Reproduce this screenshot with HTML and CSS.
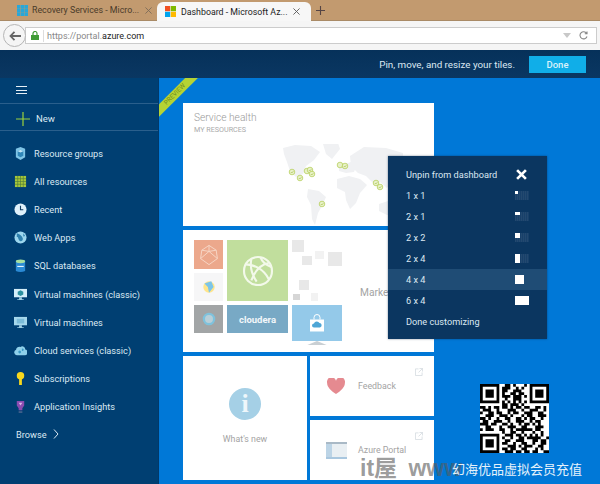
FILE: index.html
```html
<!DOCTYPE html>
<html lang="en">
<head>
<meta charset="utf-8">
<title>Dashboard - Microsoft Azure</title>
<link rel="stylesheet" href="styles.css">
</head>
<body>
<div class="tabstrip">
  <div class="tab">
    <svg class="favicon" viewBox="0 0 12 12"><path fill="#2aa7d8" d="M0 0h3.700v3.700H0zM4.200 0h3.700v3.700H4.200zM8.300 0H12v3.700H8.300zM0 4.200h3.700v3.700H0zM4.200 4.200h3.700v3.700H4.200zM8.300 4.200H12v3.700H8.300zM0 8.300h3.700V12H0zM4.200 8.300h3.700V12H4.200zM8.300 8.300H12V12H8.300z"/></svg>
    <span class="tab-title">Recovery Services - Micro...</span>
    <svg class="tab-x" viewBox="0 0 8 8"><path d="M.5.5l7 7M7.500.5l-7 7"/></svg>
  </div>
  <div class="tab tab-active">
    <svg class="favicon" viewBox="0 0 12 12"><path fill="#f25022" d="M0 0h5.700v5.700H0z"/><path fill="#7fba00" d="M6.300 0H12v5.700H6.300z"/><path fill="#00a4ef" d="M0 6.300h5.700V12H0z"/><path fill="#ffb900" d="M6.300 6.300H12V12H6.300z"/></svg>
    <span class="tab-title">Dashboard - Microsoft Az...</span>
    <svg class="tab-x" viewBox="0 0 8 8"><path d="M.5.5l7 7M7.500.5l-7 7"/></svg>
  </div>
  <svg class="newtab" viewBox="0 0 9 9"><path d="M4.500 0v9M0 4.500h9"/></svg>
</div>

<div class="toolbar">
  <div class="back">
    <svg viewBox="0 0 12 10"><path d="M5.500.8L1.500 5l4 4.200M2 5h10"/></svg>
  </div>
  <div class="urlbar">
    <svg class="lock" viewBox="0 0 8 9"><path d="M0 4h8v5H0z"/><path class="shackle" d="M2 4V2.500a2 2 0 0 1 4 0V4"/></svg>
    <span class="url"><span class="url-dim">https://portal.</span>azure.com</span>
    <svg class="drop" viewBox="0 0 8 5"><path d="M0 0h8L4 5z"/></svg>
    <svg class="reload" viewBox="0 0 9 9"><path d="M7.600 2.300A3.600 3.600 0 1 0 8 5.500M8 .6v2.200H5.800"/></svg>
  </div>
</div>

<div class="topbar">
  <span class="topbar-msg">Pin, move, and resize your tiles.</span>
  <button class="done">Done</button>
</div>

<div class="shell">
  <nav class="sidebar">
    <div class="burger"><span></span><span></span><span></span></div>
    <div class="new-row">
      <svg class="plus" viewBox="0 0 14 14"><path d="M7 0v14M0 7h14"/></svg>
      <span>New</span>
    </div>
    <ul class="nav">
      <li><svg viewBox="0 0 14 14"><path fill="#7fc4e6" d="M2 2l5-2 5 2v9l-5 3-5-3z"/><path fill="#2f86b8" d="M4 4.500L7 3l3 1.500v5L7 11 4 9.500z"/><path fill="#bfe4f5" d="M4 4.500L7 3l3 1.500L7 6z"/></svg><span>Resource groups</span></li>
      <li><svg viewBox="0 0 14 14"><path fill="#a6c73a" d="M1 1h12v12H1z"/><path stroke="#4f7d3a" stroke-width=".7" d="M4 1v12M7 1v12M10 1v12M1 4h12M1 7h12M1 10h12"/></svg><span>All resources</span></li>
      <li><svg viewBox="0 0 14 14"><circle cx="7" cy="7" r="6.500" fill="#dff1fb"/><path fill="none" stroke="#123d63" stroke-width="1.200" d="M7 3v4.300h3"/></svg><span>Recent</span></li>
      <li><svg viewBox="0 0 14 14"><circle cx="7" cy="7" r="6.500" fill="#9cd6ee"/><path fill="#2d80ae" d="M3 2.500c3 1 6 3 6.500 5.500S7 12 5.500 10 5 6 3 6.500zM10 2.500l2 3-2 .5z"/></svg><span>Web Apps</span></li>
      <li><svg viewBox="0 0 14 14"><path fill="#2a8ad4" d="M2 2h10v11c-3 1.300-7 1.300-10 0z"/><ellipse cx="7" cy="2.500" rx="5" ry="2" fill="#a6e0a0"/><path stroke="#e6f4fb" stroke-width="1.200" d="M3.500 8h7"/></svg><span>SQL databases</span></li>
      <li><svg viewBox="0 0 14 14"><path fill="#d4eef9" d="M0 1h14v9H0z"/><path fill="#2a8f9e" d="M7 2.500l3 1.500v3l-3 1.500L4 7V4z"/><path fill="#9fcfe4" d="M5.500 10h3v2h2v1h-7v-1h2z"/></svg><span>Virtual machines (classic)</span></li>
      <li><svg viewBox="0 0 14 14"><path fill="#a7d8ec" d="M0 1h14v9H0z"/><path fill="#7cbcd8" d="M3 3h8v5H3z"/><path fill="#9fcfe4" d="M5.500 10h3v2h2v1h-7v-1h2z"/></svg><span>Virtual machines</span></li>
      <li><svg viewBox="0 0 14 14"><path fill="#8fd0ea" d="M3 12a3 3 0 0 1-.8-5.800A3.500 3.500 0 0 1 7 3.300 3 3 0 0 1 12 6a3 3 0 0 1-1 6z"/><path fill="#3d9ac4" d="M5 7.500a1.500 1.500 0 1 1 0 2 1.500 1.500 0 0 1 0-2zM8.500 5a1.300 1.300 0 1 1 0 2.200z"/></svg><span>Cloud services (classic)</span></li>
      <li><svg viewBox="0 0 14 14"><circle cx="7" cy="4" r="4" fill="#f7d71e"/><path fill="#f7d71e" d="M5.500 6h3v8h-3z"/></svg><span>Subscriptions</span></li>
      <li><svg viewBox="0 0 14 14"><path fill="#8a4bb0" d="M3 1h8v5l-2 3v2H5V9L3 6z"/><path fill="#d9b8ea" d="M5 3h4L7 6z"/><path fill="#3e5f8a" d="M5 12h4v2H5z"/></svg><span>Application Insights</span></li>
    </ul>
    <div class="browse">
      <span>Browse</span>
      <svg viewBox="0 0 6 10"><path d="M1 .5L5 5 1 9.500"/></svg>
    </div>
  </nav>

  <main class="board">
    <div class="ribbon"><span>PREVIEW</span></div>
    <div class="tiles">
      <section class="tile tile-health">
        <h2 class="tile-title">Service health</h2>
        <p class="tile-sub">MY RESOURCES</p>
        <svg class="map" viewBox="0 0 120 82">
          <g fill="#f0f1f3">
            <path d="M0 4l12-3 16 1 9 6-6 8-8 6-3 8-7 3-6-6-3-9-3-8z"/>
            <path d="M40 0l15-1 2 6-8 10-6-5z"/>
            <path d="M25 45l11 2 7 6-4 9-4 7-3 12-3-6-1-14-4-8z"/>
            <path d="M56 22l12-4 5 5-2 5-8 1-7-2z"/>
            <path d="M54 35l12-3 11 3 7 6-7 8-4 10-6 6-4-9-1-8-8-4z"/>
            <path d="M67 12l14-9 22 1 17 5v24l-10 3-6 8-7-6-6 2-8-8-8-3-7-7z"/>
            <path d="M96 60l12-4 8 5-2 9-10 1-8-4z"/>
          </g>
          <g class="checks">
            <circle cx="9" cy="28" r="2.800"/><circle cx="17" cy="34" r="2.800"/><circle cx="24" cy="27" r="2.800"/><circle cx="27" cy="26" r="2.800"/><circle cx="29" cy="30" r="2.800"/><circle cx="57" cy="21" r="2.800"/><circle cx="62" cy="22" r="2.800"/><circle cx="93" cy="39" r="2.800"/><circle cx="97" cy="43" r="2.800"/><circle cx="39" cy="60" r="2.800"/>
            <path d="M7.800 28l1 1 1.600-1.800M15.800 34l1 1 1.600-1.800M25.800 26l1 1 1.600-1.800M27.800 30l1 1 1.600-1.800M60.800 22l1 1 1.600-1.800M95.800 43l1 1 1.600-1.800M91.800 39l1 1 1.600-1.800M37.800 60l1 1 1.600-1.800"/>
          </g>
        </svg>
      </section>

      <section class="tile tile-market">
        <div class="mosaic">
          <div class="m m-orange"><svg viewBox="0 0 20 20"><path d="M10 2l6 4 1 7-7 5-7-5 1-7zM10 2v5M4 6l6 1 6-1M3 13l7-6 7 6"/></svg></div>
          <div class="m m-green"><svg viewBox="0 0 24 24"><circle cx="12" cy="12" r="10.500"/><path d="M3 7c5 0 13 3 17 11M7 3c-1 5 0 11 4 17M20 6c-5 1-10 5-13 13M14 2c1 3 3 5 8 7"/></svg></div>
          <svg class="scatter" viewBox="0 0 50 61"><path fill="#e8e8e8" d="M0 0h12v12H0zM10 16h10v9H10zM36 12h14v14H36zM7 40h10v10H7z"/><path fill="#f2f2f2" d="M23 11h9v8h-9zM19 53h7v8h-7z"/><path fill="#d6d6d6" d="M1 54h7v6H1z"/></svg>
          <div class="m m-globe"><svg viewBox="0 0 14 14"><circle cx="7" cy="7" r="5" fill="#ffe58a"/><path fill="#7cc5e8" d="M3 4l6-2 2 5-4 5-1-5z"/></svg></div>
          <div class="m m-gray"><svg viewBox="0 0 14 14"><circle cx="7" cy="7" r="4.500"/></svg></div>
          <div class="m m-cloudera">cloudera</div>
          <div class="m-monitor">
            <div class="screen"><svg viewBox="0 0 16 18"><path fill="#fff" d="M1 5h14v12H1z"/><path fill="none" stroke="#fff" d="M5 5V3a3 3 0 0 1 6 0v2"/><path fill="#4ea6d6" d="M5 13a2 2 0 0 1 0-4 3 3 0 0 1 5.500-.500A2.300 2.300 0 0 1 11 13z"/></svg></div>
            <svg class="stand" viewBox="0 0 24 5"><path d="M12 0l12 5H0z"/></svg>
          </div>
        </div>
        <span class="market-label">Marketplace</span>
      </section>

      <section class="tile tile-new">
        <div class="info">i</div>
        <span class="tile-label">What's new</span>
      </section>

      <section class="tile tile-link">
        <svg class="ext" viewBox="0 0 9 9"><path d="M4 1H.5v7.500H8V5M5 .5h3.500V4M8.500.5L4 5"/></svg>
        <svg class="heart" viewBox="0 0 20 18"><path d="M10 18C4 14 0 10 0 5.500A5 5 0 0 1 10 3a5 5 0 0 1 10 2.500C20 10 16 14 10 18z"/></svg>
        <span class="tile-label">Feedback</span>
      </section>

      <section class="tile tile-link">
        <svg class="ext" viewBox="0 0 9 9"><path d="M4 1H.5v7.500H8V5M5 .5h3.500V4M8.500.5L4 5"/></svg>
        <svg class="portal" viewBox="0 0 21 17"><path fill="#e9eff3" d="M0 0h21v17H0z"/><path fill="#a9b9c6" d="M0 0h21v2H0z"/><path fill="#bcd4e6" d="M0 2h6v13H0z"/><path fill="#a9c7df" d="M0 15h21v2H0z"/></svg>
        <span class="tile-label">Azure Portal</span>
      </section>
    </div>
  </main>
</div>

<aside class="menu">
  <div class="menu-row"><span>Unpin from dashboard</span><svg class="menu-x" viewBox="0 0 10 10"><path d="M1 1l8 8M9 1l-8 8"/></svg></div>
  <div class="menu-row"><span>1 x 1</span><i class="size"><b class="f11"></b></i></div>
  <div class="menu-row"><span>2 x 1</span><i class="size"><b class="f21"></b></i></div>
  <div class="menu-row"><span>2 x 2</span><i class="size"><b class="f22"></b></i></div>
  <div class="menu-row"><span>2 x 4</span><i class="size"><b class="f24"></b></i></div>
  <div class="menu-row menu-hl"><span>4 x 4</span><i class="size"><b class="f44"></b></i></div>
  <div class="menu-row"><span>6 x 4</span><i class="size"><b class="f64"></b></i></div>
  <div class="menu-row"><span>Done customizing</span></div>
</aside>

<div class="mark-site">it屋 www</div>
<div class="mark-qr">
  <svg class="qr" viewBox="0 0 25 25">
    <path fill="#000" fill-rule="evenodd" d="M0 0h7v7H0zM1 1v5h5V1zM2 2h3v3H2zM18 0h7v7h-7zM19 1v5h5V1zM20 2h3v3h-3zM0 18h7v7H0zM1 19v5h5v-5zM2 20h3v3H2z"/>
    <path fill="none" stroke="#000" d="M9 .5h2m1 0h1m3 0h1M8 1.500h3m2 0h1m1 0h1M8 2.500h2m2 0h3M8 3.500h1m2 0h2m1 0h2M8 4.500h3m1 0h3m1 0h1M9 5.500h1m2 0h3M8 6.500h1m1 0h1m1 0h1m1 0h1m1 0h1M8 7.500h2m1 0h3m1 0h1M0 8.500h2m1 0h1m1 0h2m1 0h2m1 0h1m1 0h2m1 0h2m2 0h2m1 0h1M1 9.500h3m2 0h1m3 0h3m2 0h1m2 0h3m2 0h1M0 10.500h1m2 0h2m1 0h2m2 0h1m1 0h2m2 0h3m2 0h2M2 11.500h3m2 0h3m1 0h1m3 0h1m1 0h2m2 0h3M0 12.500h2m1 0h1m2 0h1m2 0h2m2 0h2m1 0h1m1 0h2m2 0h1M1 13.500h2m2 0h3m2 0h1m2 0h3m2 0h1m1 0h2M0 14.500h3m1 0h2m2 0h2m1 0h1m2 0h1m1 0h2m1 0h1m1 0h1M2 15.500h2m3 0h1m2 0h3m2 0h2m3 0h3M0 16.500h1m1 0h3m2 0h2m2 0h1m1 0h6m1 0h2M8 17.500h1m2 0h2m2 0h1m3 0h1m2 0h1M9 18.500h3m1 0h2m1 0h1m1 0h1m1 0h1m1 0h1M8 19.500h1m2 0h1m2 0h2m1 0h5m2 0h1M9 20.500h2m2 0h3m3 0h2m1 0h2M8 21.500h2m2 0h1m2 0h2m2 0h1m2 0h2M10 22.500h3m1 0h1m1 0h3m2 0h2M8 23.500h2m1 0h2m2 0h2m3 0h1m1 0h1M9 24.500h3m1 0h2m1 0h2m1 0h2m2 0h2"/>
  </svg>
  <div class="mark-text">幻海优品虚拟会员充值</div>
</div>
</body>
</html>
```

FILE: styles.css
```css
* { box-sizing: border-box; }
html, body { margin: 0; padding: 0; }
body {
  width: 600px;
  height: 484px;
  overflow: hidden;
  position: relative;
  background: #0078d7;
  font-family: Roboto, "Open Sans", sans-serif;
  font-size: 9.2px;
}

/* browser chrome */
.tabstrip {
  height: 21px;
  background: #c29a6f;
  display: flex;
  align-items: stretch;
  padding-left: 17px;
  border-bottom: 1px solid #a98a66;
}
.tab {
  display: flex;
  align-items: center;
  width: 140px;
  color: #4a3a2a;
}
.tab-active {
  width: 154px;
  margin-top: 2px;
  margin-bottom: -1px;
  padding-left: 8px;
  background: #f7f7f7;
  border-radius: 6px 6px 0 0;
  color: #222;
}
.favicon { width: 11px; height: 11px; flex: none; margin-right: 4px; }
.tab-active .favicon { margin-right: 5px; }
.tab-title { font-size: 8.8px; white-space: nowrap; flex: 1; overflow: hidden; }
.tab-x { width: 7px; height: 7px; flex: none; margin-right: 5px; fill: none; stroke: #7a6a58; stroke-width: 1; }
.tab-active .tab-x { stroke: #555; margin-right: 11px; }
.newtab { width: 9px; height: 9px; align-self: center; margin-left: 5px; fill: none; stroke: #544; stroke-width: 1.100; }

.toolbar {
  height: 29px;
  background: #f5f5f5;
  display: flex;
  align-items: center;
  padding: 0 3px;
}
.back {
  width: 23px;
  height: 23px;
  flex: none;
  border-radius: 50%;
  border: 1px solid #b5b5b5;
  background: #f5f5f5;
  display: flex;
  align-items: center;
  justify-content: center;
  margin-right: -1px;
  position: relative;
  z-index: 1;
}
.back svg { width: 12px; height: 10px; fill: none; stroke: #666; stroke-width: 1.800; }
.urlbar {
  flex: 1;
  height: 17px;
  background: #fff;
  border: 1px solid #ccc;
  display: flex;
  align-items: center;
  padding: 0 8px 0 5px;
}
.lock { width: 8px; height: 9px; fill: #3f9c35; flex: none; margin-right: 4px; }
.lock .shackle { fill: none; stroke: #3f9c35; stroke-width: 1.200; }
.url { flex: 1; font-size: 9px; color: #222; border-left: 1px solid #ddd; padding-left: 3px; line-height: 12px; }
.url-dim { color: #888; }
.drop { width: 8px; height: 5px; fill: #c8c8c8; flex: none; margin-right: 8px; }
.reload { width: 9px; height: 9px; fill: none; stroke: #888; stroke-width: 1.100; flex: none; }

.topbar {
  height: 28px;
  background: linear-gradient(#06315a, #0a3762);
  display: flex;
  align-items: center;
  justify-content: flex-end;
  padding-right: 14px;
  color: #dce8f2;
}
.topbar-msg { font-size: 9.800px; margin-right: 14px; }
.done {
  width: 57px;
  height: 17px;
  border: 0;
  padding: 0;
  background: #10aee8;
  color: #d8f2fb;
  font: 500 9.500px Roboto, sans-serif;
}

/* sidebar */
.shell { display: flex; height: 406px; }
.sidebar {
  width: 159px;
  flex: none;
  background: #003f72;
  border-right: 1px solid #00396a;
  color: #dbe9f3;
}
.burger {
  height: 26px;
  padding: 8px 0 0 16px;
  border-bottom: 1px solid #2a5f8c;
}
.burger span { display: block; width: 11px; height: 1px; background: #e6eff6; margin-bottom: 2.500px; }
.new-row {
  height: 27px;
  display: flex;
  align-items: center;
  padding: 3px 0 0 16px;
  border-bottom: 1px solid #2a5f8c;
  font-size: 9.500px;
}
.plus { width: 14px; height: 14px; margin-right: 6px; fill: none; stroke: #9bd13c; stroke-width: 1.200; }
.nav { list-style: none; margin: 8px 0 0; padding: 0; }
.nav li { height: 28.200px; display: flex; align-items: center; padding-left: 14px; white-space: nowrap; }
.nav svg { width: 13px; height: 13px; flex: none; margin-right: 7px; }
.browse { display: flex; align-items: center; padding: 8px 0 0 16px; }
.browse svg { width: 6px; height: 10px; margin-left: 6px; fill: none; stroke: #dbe9f3; stroke-width: 1; }

/* board */
.board { flex: 1; position: relative; overflow: hidden; padding: 25px 0 0 24px; background: #0078d7; }
.ribbon {
  position: absolute;
  left: -14px;
  top: 12px;
  width: 60px;
  height: 9px;
  transform: rotate(-45deg);
  background: #b5d334;
  color: #6f8c1c;
  font-size: 6.500px;
  line-height: 9px;
  text-align: center;
}
.ribbon span { display: block; }
.tiles {
  display: grid;
  grid-template-columns: 124px 124px;
  grid-template-rows: 123px 122px 60px 60px;
  gap: 4px 3px;
  width: 251px;
}
.tile { background: #fff; min-width: 0; color: #a3a3a3; }
.tile-health { grid-column: 1 / 3; padding: 9px 0 0 11px; }
.tile-title { margin: 0; font-weight: 300; font-size: 10.200px; line-height: 12px; color: #999; }
.tile-sub { margin: 1px 0 0; font-size: 7.200px; line-height: 10px; color: #aaa; }
.map { display: block; width: 120px; height: 82px; margin: 9px 0 0 89px; }
.checks circle { fill: #e8f1c8; stroke: #b0cc4f; stroke-width: .7; }
.checks path { fill: none; stroke: #9dbb3c; stroke-width: .6; }

.tile-market { grid-column: 1 / 3; display: flex; align-items: flex-start; padding: 10px 0 0 11px; }
.mosaic {
  display: grid;
  grid-template-columns: 29px 61px 50px;
  grid-template-rows: 29px 28px 28px;
  gap: 4px;
  width: 148px;
  flex: none;
}
.m { display: flex; align-items: center; justify-content: center; }
.m-orange { background: #eca88c; grid-column: 1; grid-row: 1; }
.m-orange svg { width: 24px; height: 24px; fill: none; stroke: #f7d6c6; stroke-width: .8; }
.m-green { grid-column: 2; grid-row: 1 / 3; background: #c1de9d; }
.m-green svg { width: 32px; height: 32px; fill: none; stroke: #f3f9ea; stroke-width: 1.600; }
.scatter { grid-column: 3; grid-row: 1 / 3; width: 50px; height: 61px; }
.m-globe { background: #f6f6f7; grid-column: 1; grid-row: 2; }
.m-globe svg { width: 16px; height: 16px; }
.m-gray { background: #a2a5a6; grid-column: 1; grid-row: 3; }
.m-gray svg { width: 16px; height: 16px; fill: #b9cfd8; stroke: #7fc2dc; stroke-width: 2; }
.m-cloudera { background: #78a9c5; color: #f2f7fa; font-weight: 700; font-size: 9.500px; grid-column: 2; grid-row: 3; }
.m-monitor { height: 40px; display: flex; flex-direction: column; align-items: center; grid-column: 3; grid-row: 3; }
.screen { width: 50px; height: 36px; background: #94c9e9; display: flex; align-items: center; justify-content: center; flex: none; }
.screen svg { width: 16px; height: 19px; }
.stand { width: 24px; height: 4px; fill: #c9cfd3; flex: none; }
.market-label { font-size: 10.200px; margin: 47px 0 0 18px; color: #a3a3a3; white-space: nowrap; }

.tile-new { grid-row: 3 / 5; display: flex; flex-direction: column; align-items: center; padding-top: 32px; }
.info {
  width: 32px;
  height: 32px;
  border-radius: 50%;
  background: #a5d0e6;
  color: #eef7fb;
  font: 700 26px/32px "Liberation Serif", serif;
  text-align: center;
}
.tile-new .tile-label { margin-top: 14px; font-size: 8.800px; }
.tile-link { display: flex; align-items: center; position: relative; padding-left: 16px; }
.tile-link .tile-label { font-size: 8.800px; }
.ext { position: absolute; right: 11px; top: 12px; width: 8px; height: 8px; fill: none; stroke: #d3dbe0; stroke-width: .9; }
.heart { width: 20px; height: 16px; fill: #e58a90; flex: none; margin-right: 12px; }
.portal { width: 21px; height: 17px; flex: none; margin-right: 11px; }

/* customize menu */
.menu {
  position: absolute;
  left: 388px;
  top: 156px;
  width: 159px;
  height: 183px;
  padding-top: 8px;
  background: #0b3660;
  color: #dce8f2;
  box-shadow: 0 0 2px rgba(0, 30, 60, .5);
}
.menu-row {
  height: 21px;
  display: flex;
  align-items: center;
  justify-content: space-between;
  padding: 0 18px;
}
.menu-hl { background: #1f4c75; }
.menu-x { width: 11px; height: 11px; margin-right: 2px; fill: none; stroke: #fff; stroke-width: 2.400; }
.size {
  display: block;
  width: 14px;
  height: 9px;
  background: repeating-linear-gradient(90deg, #23496f 0 1px, #18406a 1px 2px);
}
.size b { display: block; background: #fff; }
.f11 { width: 3px; height: 3px; }
.f21 { width: 5px; height: 3px; }
.f22 { width: 5px; height: 5px; }
.f24 { width: 5px; height: 9px; }
.f44 { width: 9px; height: 9px; }
.f64 { width: 14px; height: 9px; }
.menu-hl .size { background: none; }

/* watermark */
.mark-site {
  position: absolute;
  left: 360px;
  top: 453px;
  font: 700 23px/30px "Liberation Sans", "Noto Sans CJK SC", sans-serif;
  color: rgba(90, 90, 90, .62);
  word-spacing: 5px;
}
.mark-qr {
  position: absolute;
  left: 452px;
  top: 384px;
  width: 130px;
  display: flex;
  flex-direction: column;
  align-items: center;
}
.qr { width: 69px; height: 69px; margin-left: -5px; background: #fff; display: block; }
.mark-text {
  margin-top: 6px;
  font: 13px/20px "Noto Sans CJK SC", sans-serif;
  color: #e6f2fb;
  white-space: nowrap;
}
```
